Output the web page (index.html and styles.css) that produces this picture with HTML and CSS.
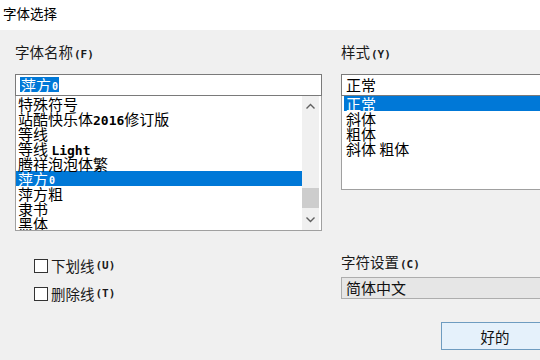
FILE: index.html
```html
<!DOCTYPE html>
<html lang="zh">
<head>
<meta charset="utf-8">
<title>字体选择</title>
<link rel="stylesheet" href="styles.css">
</head>
<body>
<div class="win">
  <div class="titlebar">字体选择</div>
  <div class="content">
    <div class="col left">
      <div class="label">字体名称<span class="mn">(F)</span></div>
      <div class="input"><span class="sel">萍方<span class="zero">0</span></span></div>
      <div class="list fontlist">
        <div class="items">
          <div class="item">特殊符号</div>
          <div class="item">站酷快乐体<span class="mnb">2016</span>修订版</div>
          <div class="item">等线</div>
          <div class="item">等线 <span class="mnb">Light</span></div>
          <div class="item">腾祥泡泡体繁</div>
          <div class="item selected">萍方<span class="zero">0</span></div>
          <div class="item">萍方粗</div>
          <div class="item">隶书</div>
          <div class="item">黑体</div>
        </div>
        <div class="scrollbar">
          <svg class="arrow" width="17" height="17" viewBox="0 0 17 17"><path d="M4.5 10.5 L8.5 6.5 L12.5 10.5" fill="none" stroke="#606060" stroke-width="1.4"/></svg>
          <div class="track"><div class="thumb"></div></div>
          <svg class="arrow" width="17" height="17" viewBox="0 0 17 17"><path d="M4.5 6.5 L8.5 10.5 L12.5 6.5" fill="none" stroke="#606060" stroke-width="1.4"/></svg>
        </div>
      </div>
      <div class="checks">
        <div class="check"><span class="box"></span>下划线<span class="mn">(U)</span></div>
        <div class="check"><span class="box"></span>删除线<span class="mn">(T)</span></div>
      </div>
    </div>
    <div class="col right">
      <div class="label">样式<span class="mn">(Y)</span></div>
      <div class="input plain">正常</div>
      <div class="list stylelist">
        <div class="item selected">正常</div>
        <div class="item">斜体</div>
        <div class="item">粗体</div>
        <div class="item">斜体 粗体</div>
      </div>
      <div class="label charset">字符设置<span class="mn">(C)</span></div>
      <div class="combo">简体中文</div>
      <button class="ok">好的</button>
    </div>
  </div>
</div>
</body>
</html>
```

FILE: styles.css
```css
* { box-sizing: border-box; }
html, body {
  margin: 0;
  padding: 0;
  width: 540px;
  height: 360px;
  overflow: hidden;
  background: #f0f0f0;
}
.win {
  width: 540px;
  height: 360px;
  display: flex;
  flex-direction: column;
  font-family: "Noto Sans CJK SC", "DejaVu Sans", sans-serif;
  color: #111;
  overflow: hidden;
}
.titlebar {
  height: 30px;
  background: #ffffff;
  padding: 4px 0 0 3px;
  font-size: 13.5px;
  line-height: 18px;
  color: #000;
}
.content {
  flex: 1;
  display: flex;
  gap: 19px;
  padding-left: 15px;
  overflow: hidden;
}
.col {
  display: flex;
  flex-direction: column;
}
.left { width: 307px; flex: none; }
.right { width: 199px; flex: none; overflow: hidden; }
.label {
  margin-top: 13px;
  height: 18px;
  font-size: 14.5px;
  line-height: 18px;
  color: #1a1a1a;
}
.mn {
  font-family: "DejaVu Sans Mono", monospace;
  font-weight: bold;
  font-size: 11px;
  margin-left: 1px;
}
.mnb {
  font-family: "DejaVu Sans Mono", monospace;
  font-weight: bold;
  font-size: 13px;
}
.input {
  margin-top: 13px;
  height: 22px;
  border: 1px solid #7a7a7a;
  background: #fff;
  padding: 2px 0 0 4px;
  font-size: 15px;
  line-height: 15px;
  white-space: nowrap;
}
.right .input { width: 220px; flex: none; }
.input.plain { padding-left: 4px; color: #000; }
.sel {
  display: inline-block;
  background: #0078d7;
  color: #fff;
  padding: 0 1px;
  height: 15px;
}
.zero {
  font-family: "DejaVu Sans Mono", monospace;
  font-weight: bold;
  font-size: 10px;
  vertical-align: 1px;
  margin-left: 1px;
}
.list {
  border: 1px solid #a0a0a0;
  border-top: none;
  background: #fff;
  overflow: hidden;
}
.fontlist {
  height: 135px;
  display: flex;
}
.items {
  flex: 1;
}
.item {
  height: 15px;
  font-size: 15px;
  line-height: 15px;
  padding-left: 2px;
  color: #000;
  white-space: nowrap;
}
.item.selected {
  background: #0078d7;
  color: #fff;
}
.scrollbar {
  width: 17px;
  margin-right: 2px;
  background: #f0f0f0;
  display: flex;
  flex-direction: column;
  align-items: center;
  padding: 2px 0;
}
.arrow { flex: none; }
.track {
  flex: 1;
  width: 17px;
  display: flex;
  flex-direction: column;
  justify-content: flex-end;
  padding-bottom: 3px;
}
.thumb {
  width: 17px;
  height: 20px;
  background: #cdcdcd;
}
.stylelist {
  width: 220px;
  flex: none;
  height: 94px;
  padding-left: 2px;
}
.checks {
  margin-top: 27px;
  padding-left: 19px;
  display: flex;
  flex-direction: column;
  gap: 13px;
}
.check {
  display: flex;
  align-items: center;
  height: 15px;
  font-size: 14.5px;
  line-height: 15px;
  color: #1a1a1a;
}
.box {
  width: 14px;
  height: 14px;
  border: 1px solid #333;
  background: #fff;
  margin-right: 3px;
}
.charset { margin-top: 63px; }
.combo {
  margin-top: 6px;
  width: 220px;
  flex: none;
  height: 22px;
  background: #e6e6e6;
  border: 1px solid #adadad;
  padding: 2px 0 0 4px;
  font-size: 15px;
  line-height: 16px;
  color: #111;
}
.ok {
  margin-top: 23px;
  margin-left: 100px;
  width: 108px;
  height: 28px;
  flex: none;
  background: #e5f1fb;
  border: 1px solid #6e9cc0;
  font-family: "Noto Sans CJK SC", sans-serif;
  font-size: 14.5px;
  color: #111;
  padding: 0;
}
```
